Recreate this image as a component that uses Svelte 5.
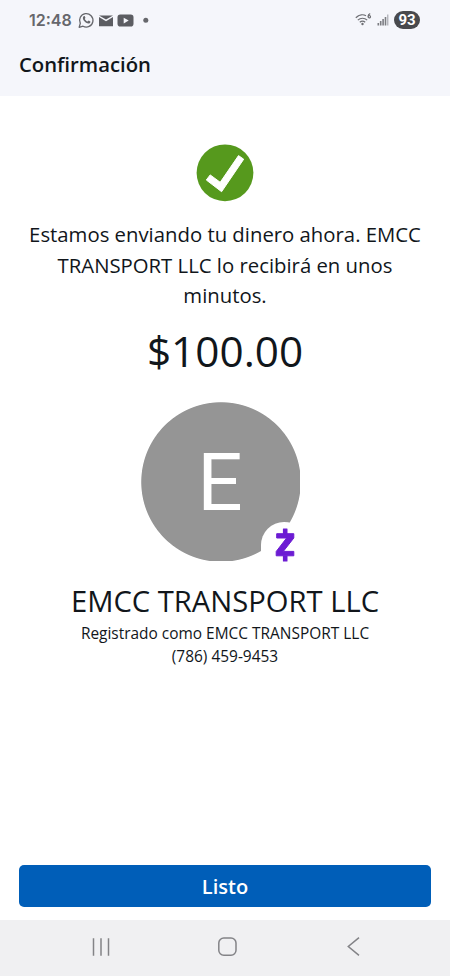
<script lang="ts">
	const time = '12:48';
	const battery = 93;
	const recipient = 'EMCC TRANSPORT LLC';
	const phone = '(786) 459-9453';
	const amount = '$100.00';
</script>

<div class="screen">
	<header>
		<div class="status">
			<span class="time">{time}</span>
			<svg class="notifications" width="72" height="18" viewBox="0 0 72 18" aria-hidden="true">
				<path
					d="M1.2 16.3l1.1-3.9A6.7 6.7 0 1 1 5 15.2z"
					fill="none"
					stroke="#66676c"
					stroke-width="1.3"
					stroke-linejoin="round"
				/>
				<path
					d="M5.6 5.3c.5-.5 1-.4 1.2 0l.6 1.5c.1.3-.5.9-.6 1.1.5 1.2 1.6 2.1 2.8 2.6.3 0 .8-1 1.1-.9l1.6.8c.3.2.1 1-.4 1.5-.9.8-2.1.7-3.9-.2C6.5 10.8 5.1 9 4.9 7.5c-.1-.8.1-1.6.7-2.2z"
					fill="#66676c"
				/>
				<path d="M21 4.4h14l-7 4.2-7-4.2z" fill="#5c5d62" />
				<path d="M21 6l7 4.3L35 6v9.2H21z" fill="#5c5d62" />
				<rect x="39.5" y="3.6" width="16" height="12" rx="2.8" fill="#5c5d62" />
				<path d="M45.7 6.8l5 2.8-5 2.8z" fill="#f5f6fb" />
				<circle cx="67.8" cy="9.3" r="2.5" fill="#66676c" />
			</svg>
			<div class="signal">
				<svg width="38" height="16" viewBox="0 0 38 16" aria-hidden="true">
					<g fill="none" stroke="#6d6e73" stroke-width="1.2">
						<path d="M.8 5.7C4.3 2.3 8.5 2.2 11 3.7" />
						<path d="M2.8 8.1c2.7-2.5 6.7-2.5 9.4 0" />
						<path d="M4.8 10.3c1.6-1.4 3.8-1.4 5.4 0" />
						<path d="M15.2 1.7c-1.5.4-2.1 1.4-2.1 2.8" />
						<circle cx="14.3" cy="4.7" r="1.2" />
					</g>
					<circle cx="7.5" cy="12" r="1.2" fill="#6d6e73" />
					<g fill="#7c7d82">
						<rect x="22.5" y="11" width="1.6" height="2.5" />
						<rect x="24.9" y="9" width="1.6" height="4.5" />
						<rect x="27.3" y="7" width="1.6" height="6.5" />
						<rect x="29.7" y="5" width="1.6" height="8.5" />
					</g>
					<rect x="32.1" y="2.5" width="1.3" height="11" fill="#b0b1b7" />
				</svg>
				<span class="battery">{battery}</span>
			</div>
		</div>
		<h1>Confirmación</h1>
	</header>

	<main>
		<svg class="check" width="58" height="58" viewBox="0 0 58 58" aria-hidden="true">
			<circle cx="29" cy="28.8" r="28.4" fill="#56991d" />
			<path
				d="M10.3 36L14.2 30.9L24.2 38.3L42.5 11.6L47.7 15.2L25.6 47.7z"
				fill="#fff"
				stroke="#fff"
				stroke-linejoin="round"
			/>
		</svg>
		<p class="message">Estamos enviando tu dinero ahora. {recipient} lo recibirá en unos minutos.</p>
		<p class="amount">{amount}</p>
		<div class="avatar">
			<span class="initial">{recipient[0]}</span>
			<svg class="badge" width="39" height="42" viewBox="0 0 39 42" aria-hidden="true">
				<path d="M0 36V23A23 23 0 0 1 23 0Q31 0 39 5V42H0z" fill="#fff" />
				<g fill="#6c1cd3">
					<path
						d="M15.7 11.7h17.1v4.3L22.3 29.4h10.5v4.4H15.2v-4.300L25.600 16H15.700z"
						stroke="#6c1cd3"
						stroke-linejoin="round"
					/>
					<rect x="21.9" y="6.5" width="4.6" height="5.5" rx=".5" />
					<rect x="21.9" y="33.500" width="4.6" height="6" rx=".5" />
				</g>
			</svg>
		</div>
		<h2>{recipient}</h2>
		<p class="detail">Registrado como {recipient}</p>
		<p class="detail">{phone}</p>
		<button type="button">Listo</button>
	</main>

	<nav>
		<svg width="20" height="20" viewBox="0 0 20 20" aria-label="Recientes">
			<path d="M2.5 1.2v17.6M10 1.2v17.6M17.5 1.2v17.6" />
		</svg>
		<svg width="20" height="20" viewBox="0 0 20 20" aria-label="Inicio">
			<rect x=".8" y="1" width="17.2" height="17.2" rx="5" />
		</svg>
		<svg width="20" height="20" viewBox="0 0 20 20" aria-label="Atrás">
			<path d="M15 .6L4.3 9.5L15 18.4" />
		</svg>
	</nav>
</div>

<style>
	:global(body) {
		margin: 0;
		background: #fff;
	}

	.screen {
		display: flex;
		flex-direction: column;
		width: 450px;
		height: 976px;
		overflow: hidden;
		color: #11161b;
		background: #fff;
		font-family: 'Open Sans', 'Noto Sans', sans-serif;
	}

	header {
		height: 96px;
		flex: none;
		background: #f5f6fb;
	}

	.status {
		display: flex;
		align-items: center;
		height: 40px;
		padding: 0 30px 0 29px;
	}

	.time {
		width: 49px;
		color: #66676c;
		font: 600 16px/20px Inter, sans-serif;
	}

	.signal {
		display: flex;
		align-items: center;
		gap: 1px;
		margin-left: auto;
	}

	.battery {
		width: 26px;
		height: 18px;
		border-radius: 9px;
		color: #fff;
		background: #48494d;
		font: 700 15px/18px Roboto, sans-serif;
		text-align: center;
	}

	h1 {
		margin: 10px 0 0 19px;
		font-size: 20.3px;
		font-weight: 600;
		line-height: 28px;
	}

	main {
		display: flex;
		flex: 1;
		flex-direction: column;
		align-items: center;
		padding: 48px 19px 13px;
	}

	.check {
		flex: none;
	}

	p,
	h2 {
		margin: 0;
		text-align: center;
	}

	.message {
		width: 400px;
		margin-top: 17px;
		font-size: 20.32px;
		line-height: 30.5px;
	}

	.amount {
		margin-top: 10px;
		font-size: 42.3px;
		line-height: 60px;
	}

	.avatar {
		position: relative;
		width: 159px;
		height: 159px;
		margin: 21px 9px 0 0;
		background: radial-gradient(circle at 80px 80px, #959595 79.3px, transparent 80.2px);
	}

	.initial {
		display: block;
		padding-right: 1px;
		color: #fff;
		font: 80px/162px Roboto, sans-serif;
		text-align: center;
	}

	.badge {
		position: absolute;
		top: 120px;
		left: 120px;
	}

	h2 {
		margin: 20px 0 1px;
		font-size: 29.2px;
		font-weight: 400;
		line-height: 40px;
	}

	.detail {
		font-size: 15.45px;
		line-height: 23px;
	}

	button {
		width: 412px;
		height: 42px;
		margin-top: auto;
		padding: 1px 0 0;
		border: 0;
		border-radius: 5px;
		color: #fff;
		background: #005eb8;
		font: 600 20px/41px 'Open Sans', sans-serif;
	}

	nav {
		display: flex;
		justify-content: space-between;
		height: 39px;
		flex: none;
		padding: 17px 86px 0 91px;
		background: #f0f0f2;
	}

	nav svg {
		fill: none;
		stroke: #838387;
		stroke-width: 1.5;
	}
</style>
